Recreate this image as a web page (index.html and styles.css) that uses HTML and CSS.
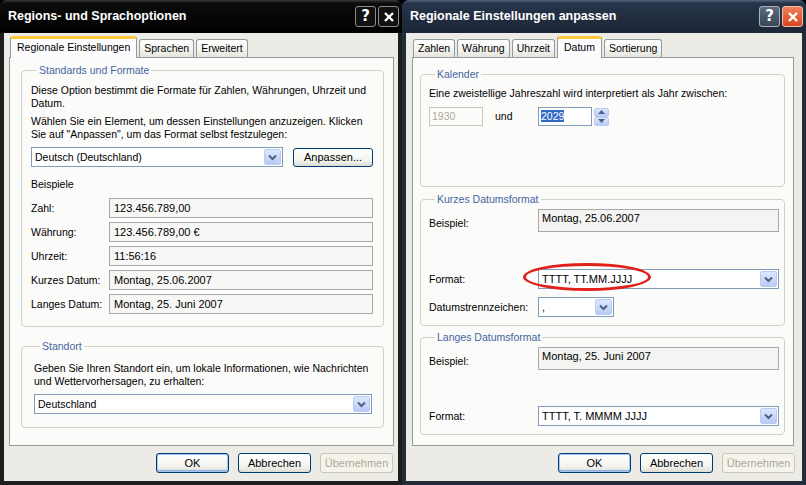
FILE: index.html
```html
<!DOCTYPE html>
<html lang="de">
<head>
  <meta charset="UTF-8">
  <title>Regions- und Sprachoptionen</title>
  <link rel="stylesheet" href="styles.css">
</head>
<body>

  <div class="desktop">

    <!-- left dialog -->
    <div class="window win-left">
      <div class="titlebar">
        <span class="title">Regions- und Sprachoptionen</span>
        <div class="caption-btns">
          <span class="cap-btn">?</span>
          <span class="cap-btn close">
            <svg width="12" height="12" viewBox="0 0 12 12"><path d="M2 2 L10 10 M10 2 L2 10" stroke="#fff" stroke-width="2.4"/></svg>
          </span>
        </div>
      </div>
      <div class="client">
        <div class="tabs">
          <span class="tab active">Regionale Einstellungen</span>
          <span class="tab">Sprachen</span>
          <span class="tab">Erweitert</span>
        </div>
        <div class="panel panel-left">
          <fieldset class="group group-formats">
            <legend>Standards und Formate</legend>
            <p>Diese Option bestimmt die Formate für Zahlen, Währungen, Uhrzeit und Datum.</p>
            <p class="gap-sm">Wählen Sie ein Element, um dessen Einstellungen anzuzeigen. Klicken Sie auf "Anpassen", um das Format selbst festzulegen:</p>
            <div class="combo-row">
              <div class="combo combo-lang">
                <span class="combo-text">Deutsch (Deutschland)</span>
                <span class="drop-btn"><svg width="9" height="7" viewBox="0 0 9 7"><path d="M1 1.5 L4.5 5 L8 1.5" fill="none" stroke="#4d6185" stroke-width="2"/></svg></span>
              </div>
              <button class="btn btn-anpassen">Anpassen...</button>
            </div>
            <div class="examples-head">Beispiele</div>
            <div class="sample-list">
              <div class="sample-row"><span class="lbl">Zahl:</span><span class="field">123.456.789,00</span></div>
              <div class="sample-row"><span class="lbl">Währung:</span><span class="field">123.456.789,00 €</span></div>
              <div class="sample-row"><span class="lbl">Uhrzeit:</span><span class="field">11:56:16</span></div>
              <div class="sample-row"><span class="lbl">Kurzes Datum:</span><span class="field">Montag, 25.06.2007</span></div>
              <div class="sample-row"><span class="lbl">Langes Datum:</span><span class="field">Montag, 25. Juni 2007</span></div>
            </div>
          </fieldset>

          <fieldset class="group group-location">
            <legend>Standort</legend>
            <p>Geben Sie Ihren Standort ein, um lokale Informationen, wie Nachrichten und Wettervorhersagen, zu erhalten:</p>
            <div class="combo combo-country">
              <span class="combo-text">Deutschland</span>
              <span class="drop-btn"><svg width="9" height="7" viewBox="0 0 9 7"><path d="M1 1.5 L4.5 5 L8 1.5" fill="none" stroke="#4d6185" stroke-width="2"/></svg></span>
            </div>
          </fieldset>
        </div>
        <div class="dialog-buttons">
          <button class="btn default">OK</button>
          <button class="btn">Abbrechen</button>
          <button class="btn disabled">Übernehmen</button>
        </div>
      </div>
    </div>

    <!-- right dialog -->
    <div class="window win-right">
      <div class="titlebar">
        <span class="title">Regionale Einstellungen anpassen</span>
        <div class="caption-btns">
          <span class="cap-btn">?</span>
          <span class="cap-btn close">
            <svg width="12" height="12" viewBox="0 0 12 12"><path d="M2 2 L10 10 M10 2 L2 10" stroke="#fff" stroke-width="2.4"/></svg>
          </span>
        </div>
      </div>
      <div class="client">
        <div class="tabs">
          <span class="tab">Zahlen</span>
          <span class="tab">Währung</span>
          <span class="tab">Uhrzeit</span>
          <span class="tab active">Datum</span>
          <span class="tab">Sortierung</span>
        </div>
        <div class="panel panel-right">
          <fieldset class="group group-calendar">
            <legend>Kalender</legend>
            <p>Eine zweistellige Jahreszahl wird interpretiert als Jahr zwischen:</p>
            <div class="year-row">
              <span class="edit edit-disabled">1930</span>
              <span class="und">und</span>
              <span class="edit"><span class="selected">2029</span></span>
              <span class="spin">
                <span class="spin-btn"><svg width="7" height="4" viewBox="0 0 7 4"><path d="M0 4 L3.5 0 L7 4 Z" fill="#4d6185"/></svg></span>
                <span class="spin-btn"><svg width="7" height="4" viewBox="0 0 7 4"><path d="M0 0 L3.5 4 L7 0 Z" fill="#4d6185"/></svg></span>
              </span>
            </div>
          </fieldset>

          <fieldset class="group group-short">
            <legend>Kurzes Datumsformat</legend>
            <div class="form-row">
              <span class="lbl2 lbl-low">Beispiel:</span>
              <span class="sample-box">Montag, 25.06.2007</span>
            </div>
            <div class="form-row format-row">
              <span class="lbl2">Format:</span>
              <div class="combo combo-format">
                <span class="combo-text">TTTT, TT.MM.JJJJ</span>
                <span class="drop-btn"><svg width="9" height="7" viewBox="0 0 9 7"><path d="M1 1.5 L4.5 5 L8 1.5" fill="none" stroke="#4d6185" stroke-width="2"/></svg></span>
              </div>
              <span class="mark"></span>
            </div>
            <div class="form-row sep-row">
              <span class="lbl2">Datumstrennzeichen:</span>
              <div class="combo combo-sep">
                <span class="combo-text">,</span>
                <span class="drop-btn"><svg width="9" height="7" viewBox="0 0 9 7"><path d="M1 1.5 L4.5 5 L8 1.5" fill="none" stroke="#4d6185" stroke-width="2"/></svg></span>
              </div>
            </div>
          </fieldset>

          <fieldset class="group group-long">
            <legend>Langes Datumsformat</legend>
            <div class="form-row">
              <span class="lbl2 lbl-low">Beispiel:</span>
              <span class="sample-box">Montag, 25. Juni 2007</span>
            </div>
            <div class="form-row format-row">
              <span class="lbl2">Format:</span>
              <div class="combo combo-format">
                <span class="combo-text">TTTT, T. MMMM JJJJ</span>
                <span class="drop-btn"><svg width="9" height="7" viewBox="0 0 9 7"><path d="M1 1.5 L4.5 5 L8 1.5" fill="none" stroke="#4d6185" stroke-width="2"/></svg></span>
              </div>
            </div>
          </fieldset>
        </div>
        <div class="dialog-buttons">
          <button class="btn default">OK</button>
          <button class="btn">Abbrechen</button>
          <button class="btn disabled">Übernehmen</button>
        </div>
      </div>
    </div>

  </div>

</body>
</html>
```

FILE: styles.css
```css
* {
  box-sizing: border-box;
}

body {
  margin: 0;
  background: #000;
  font-family: 'Liberation Sans', Arial, sans-serif;
  font-size: 10.5px;
  line-height: 13px;
  color: #000;
}

p {
  margin: 0;
}

.desktop {
  display: flex;
  width: 806px;
  height: 485px;
}

/* window frame */

.window {
  display: flex;
  flex-direction: column;
  height: 485px;
  padding: 0 4px 4px;
  border-radius: 7px 7px 0 0;
}

.win-left {
  width: 402px;
  background: #1e1e1e;
}

.win-right {
  width: 404px;
  background: #222c3a;
}

.titlebar {
  height: 33px;
  margin: 0 -4px;
  padding: 0 3px 0 8px;
  display: flex;
  align-items: center;
  justify-content: space-between;
  border-radius: 7px 7px 0 0;
}

.win-left .titlebar {
  background: linear-gradient(#3a3a3a 0, #0c0c0c 3px, #000 100%);
}

.win-right .titlebar {
  background: linear-gradient(#56667c 0, #27344a 3px, #1c2636 100%);
}

.title {
  font-family: 'Liberation Sans', Arial, sans-serif;
  font-weight: bold;
  font-size: 12.5px;
  color: #fff;
}

.caption-btns {
  display: flex;
  gap: 2px;
}

.cap-btn {
  width: 21px;
  height: 21px;
  border: 1px solid #8c8c8c;
  border-radius: 3px;
  background: #111;
  color: #fff;
  font-family: 'DejaVu Sans', sans-serif;
  font-weight: bold;
  font-size: 15px;
  display: flex;
  align-items: center;
  justify-content: center;
}

.win-right .cap-btn {
  background: linear-gradient(#5c6a7c, #3a4656);
  border-color: #aab4c0;
}

.win-right .cap-btn.close {
  background: linear-gradient(#f08058, #d8461e);
  border-color: #f2c0b0;
}

/* client area */

.client {
  flex: 1;
  display: flex;
  flex-direction: column;
  background: #ecebe6;
  padding-top: 3px;
}

.tabs {
  display: flex;
  align-items: flex-end;
  height: 21px;
  padding-left: 6px;
  position: relative;
  z-index: 1;
}

.win-right .tabs {
  padding-left: 7px;
}

.tab {
  height: 18px;
  padding: 0 4px;
  margin-right: 2px;
  border: 1px solid #919b9c;
  border-bottom: none;
  border-radius: 3px 3px 0 0;
  background: linear-gradient(#ffffff, #f3f3ef 60%, #e4e4dc);
  line-height: 17px;
  white-space: nowrap;
}

.tab.active {
  height: 22px;
  margin-bottom: -1px;
  background: #fcfcfe;
  border-top: 3px solid #ffc83c;
  padding: 0 6px;
  line-height: 17px;
}

.panel {
  flex: 1;
  border: 1px solid #919b9c;
  background: #fbfbf9;
  display: flex;
  flex-direction: column;
}

.panel-left {
  margin: 0 4px 0 5px;
  padding: 6px 9px 0 11px;
}

.panel-right {
  margin: 0 8px 0 6px;
  padding: 10px 8px 0 7px;
}

/* group boxes */

.group {
  margin: 0;
  border: 1px solid #d3d2c6;
  border-radius: 4px;
}

.group legend {
  color: #4465a2;
  padding: 0 2px;
  margin-left: 6px;
  line-height: 13px;
}

.group-formats {
  padding: 7px 10px 12px 9px;
}

.gap-sm {
  margin-top: 5px;
}

.combo-row {
  display: flex;
  align-items: center;
  justify-content: space-between;
  margin-top: 6px;
}

.combo {
  display: flex;
  align-items: center;
  justify-content: space-between;
  height: 20px;
  border: 1px solid #7f9db9;
  background: #fff;
  padding: 0 1px 0 3px;
}

.drop-btn {
  width: 17px;
  height: 16px;
  border: 1px solid #b9cbf3;
  border-radius: 2px;
  background: linear-gradient(#dde7fd, #b8cbf6);
  display: flex;
  align-items: center;
  justify-content: center;
}

.combo-lang {
  width: 252px;
}

.btn {
  width: 73px;
  height: 20px;
  border: 1px solid #003c74;
  border-radius: 3px;
  background: linear-gradient(#ffffff, #f3f3ee 70%, #dcdcd2);
  font-family: inherit;
  font-size: 11px;
  color: #000;
  padding: 0;
}

.btn-anpassen {
  width: 80px;
  height: 19px;
}

.btn.default {
  box-shadow: inset 0 0 0 1px #a8c4ef, inset 0 -1px 0 1px #8eb0e8;
}

.btn.disabled {
  border-color: #c9c7ba;
  background: #f5f4ea;
  color: #aca899;
}

.examples-head {
  margin-top: 11px;
}

.sample-list {
  display: flex;
  flex-direction: column;
  gap: 4px;
  margin-top: 7px;
}

.sample-row {
  display: flex;
  align-items: center;
}

.lbl {
  width: 78px;
}

.field {
  flex: 1;
  height: 20px;
  border: 1px solid #a7a7a7;
  background: #f7f7f5;
  padding: 0 4px;
  line-height: 18px;
  font-size: 11px;
}

.group-location {
  margin-top: 13px;
  padding: 9px 11px 13px 12px;
}

.combo-country {
  margin-top: 6px;
}

/* right dialog */

.group-calendar {
  padding: 6px 8px 60px 8px;
}

.year-row {
  display: flex;
  align-items: center;
  margin-top: 7px;
}

.edit {
  width: 54px;
  height: 19px;
  border: 1px solid #7f9db9;
  background: #fff;
  padding: 0 2px;
  line-height: 17px;
}

.edit-disabled {
  border-color: #c9c7ba;
  color: #aca899;
  background: #fbfbf9;
}

.und {
  width: 55px;
  padding-left: 12px;
}

.selected {
  background: #316ac5;
  color: #fff;
}

.spin {
  display: flex;
  flex-direction: column;
  margin-left: 2px;
}

.spin-btn {
  width: 15px;
  height: 9px;
  border: 1px solid #b9cbf3;
  border-radius: 2px;
  background: linear-gradient(#dde7fd, #b8cbf6);
  display: flex;
  align-items: center;
  justify-content: center;
}

.group-short {
  margin-top: 6px;
  padding: 3px 5px 8px 8px;
}

.group-long {
  margin-top: 5px;
  padding: 3px 5px 8px 8px;
}

.form-row {
  display: flex;
  align-items: center;
  position: relative;
}

.lbl2 {
  width: 109px;
  flex-shrink: 0;
}

.lbl-low {
  align-self: flex-start;
  margin-top: 8px;
}

.sample-box {
  flex: 1;
  height: 23px;
  border: 1px solid #a7a7a7;
  background: #f4f4f2;
  padding: 2px 3px;
  font-size: 11px;
}

.format-row {
  margin-top: 37px;
}

.group-long .format-row {
  margin-top: 36px;
}

.combo-format {
  flex: 1;
  font-size: 11px;
}

.sep-row {
  margin-top: 8px;
}

.combo-sep {
  width: 76px;
}

/* red hand-drawn marker over the format field */
.mark {
  position: absolute;
  left: 94px;
  top: -6px;
  width: 128px;
  height: 28px;
  border: 3px solid #e0201b;
  border-radius: 50%;
}

.dialog-buttons {
  display: flex;
  justify-content: flex-end;
  gap: 9px;
  padding: 7px 5px 8px 0;
}

.win-right .dialog-buttons {
  padding-right: 7px;
}
```
